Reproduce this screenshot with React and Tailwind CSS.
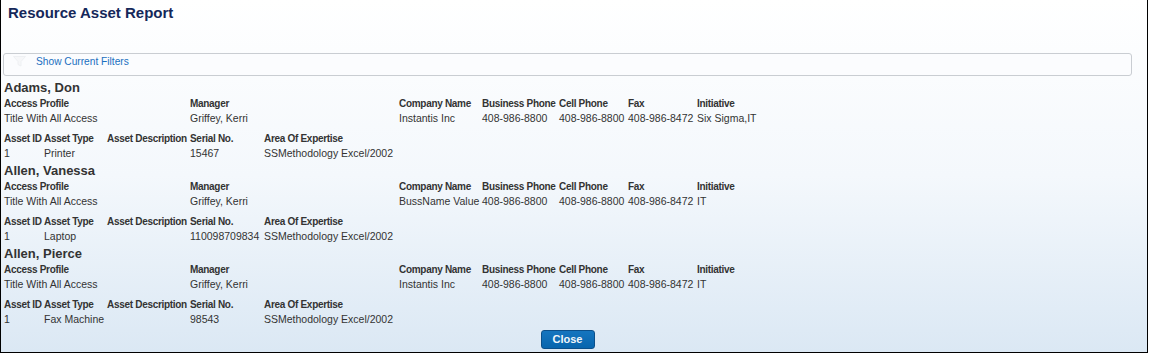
import React from 'react';

const people = [
  {
    name: 'Adams, Don',
    company: 'Instantis Inc',
    initiative: 'Six Sigma,IT',
    asset: { id: '1', type: 'Printer', serial: '15467' }
  },
  {
    name: 'Allen, Vanessa',
    company: 'BussName Value',
    initiative: 'IT',
    asset: { id: '1', type: 'Laptop', serial: '110098709834' }
  },
  {
    name: 'Allen, Pierce',
    company: 'Instantis Inc',
    initiative: 'IT',
    asset: { id: '1', type: 'Fax Machine', serial: '98543' }
  }
];

const profileCols = ['w-[186px]', 'w-[209px]', 'w-[83px]', 'w-[77px]', 'w-[69px]', 'w-[69px]', 'w-[120px]'];
const assetCols = ['w-[40px]', 'w-[63px]', 'w-[83px]', 'w-[74px]', 'w-[200px]'];

const Label = ({ className, children }) => (
  <div className={`${className} shrink-0 whitespace-nowrap text-[10px] font-bold tracking-[-0.3px] text-[#333]`}>
    {children}
  </div>
);

const Value = ({ className, children }) => (
  <div className={`${className} shrink-0 whitespace-nowrap text-[10.5px] text-[#333]`}>{children}</div>
);

const PersonBlock = ({ person }) => {
  const profileLabels = ['Access Profile', 'Manager', 'Company Name', 'Business Phone', 'Cell Phone', 'Fax', 'Initiative'];
  const profileValues = [
    'Title With All Access',
    'Griffey, Kerri',
    person.company,
    '408-986-8800',
    '408-986-8800',
    '408-986-8472',
    person.initiative
  ];
  const assetLabels = ['Asset ID', 'Asset Type', 'Asset Description', 'Serial No.', 'Area Of Expertise'];
  const assetValues = [person.asset.id, person.asset.type, '', person.asset.serial, 'SSMethodology Excel/2002'];

  return (
    <div>
      <div className="h-[17px] text-[13px] font-bold leading-[17px] text-[#333]">{person.name}</div>
      {/* profile table */}
      <div className="flex h-[15px] items-center">
        {profileLabels.map((l, i) => (
          <Label key={l} className={profileCols[i]}>{l}</Label>
        ))}
      </div>
      <div className="flex h-[16px] items-center">
        {profileValues.map((v, i) => (
          <Value key={i} className={profileCols[i]}>{v}</Value>
        ))}
      </div>
      {/* asset table */}
      <div className="mt-[3px] flex h-[16px] items-center">
        {assetLabels.map((l, i) => (
          <Label key={l} className={assetCols[i]}>{l}</Label>
        ))}
      </div>
      <div className="flex h-[16px] items-center">
        {assetValues.map((v, i) => (
          <Value key={i} className={assetCols[i]}>{v}</Value>
        ))}
      </div>
    </div>
  );
};

export default function App() {
  return (
    <div className="h-[353px] w-[1148px] overflow-hidden border-r border-b border-l border-black bg-gradient-to-b from-white via-[#f4f8fc] to-[#dbe8f4] font-['Liberation_Sans',Arial,sans-serif]">
      {/* header */}
      <div className="h-[53px] pl-[7px] pt-[4px]">
        <h1 className="text-[15px] font-bold leading-[18px] text-[#15285a]">Resource Asset Report</h1>
      </div>

      {/* filters bar */}
      <div className="ml-[2px] flex h-[23px] w-[1129px] rounded-[3px] border border-[#c9cdd2] bg-[#fbfcfe]">
        <div className="flex h-[12px] items-center pl-[9px] pt-[3px]">
          <svg width="13" height="11" viewBox="0 0 13 11">
            <path d="M0.5 0.5 H12.5 L8 5.5 V10 L5 8.5 V5.5 Z" fill="#f6f7f9" stroke="#eef0f3" strokeWidth="1" />
          </svg>
        </div>
        <div className="pl-[10px] pt-[2px] text-[10.2px] leading-[12px] text-[#1a6fc0]">Show Current Filters</div>
      </div>

      {/* report body */}
      <div className="mt-[3px] pl-[3px]">
        {people.map((p) => (
          <PersonBlock key={p.name} person={p} />
        ))}
      </div>

      <div className="mt-[2px] flex w-[1133px] justify-center">
        <button className="h-[19px] w-[54px] rounded-[3px] border border-[#0b4f8a] bg-gradient-to-b from-[#1575bf] to-[#0865ad] text-[11px] font-bold leading-[17px] text-[#f2f6fa]">
          Close
        </button>
      </div>
    </div>
  );
}
